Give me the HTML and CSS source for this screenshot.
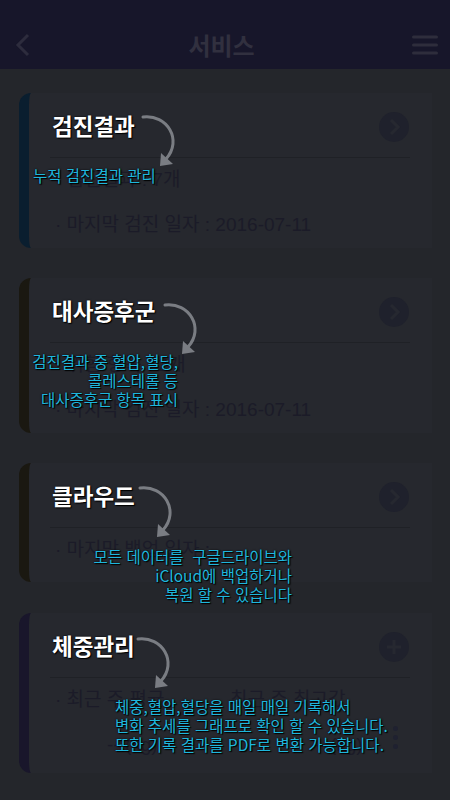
FILE: index.html
```html
<!DOCTYPE html>
<html lang="ko">
<head>
    <meta charset="UTF-8">
    <meta name="viewport" content="width=device-width, initial-scale=1.0">
    <title>서비스</title>
    <link rel="stylesheet" href="styles.css">
</head>
<body>
    <svg class="defs" width="0" height="0">
        <symbol id="hintArrow" viewBox="0 0 40 56">
            <path d="M2 3 C 26 0, 42 26, 25 45" fill="none" stroke="#7a7d83" stroke-width="3" stroke-linecap="round"/>
            <polygon points="19,52 20,39 32,50" fill="#7a7d83"/>
        </symbol>
    </svg>

    <header class="topbar">
        <button class="icon-btn">
            <svg width="16" height="24" viewBox="0 0 16 24"><polyline points="13,2 3,12 13,22" fill="none" stroke="#2d2c3d" stroke-width="3"/></svg>
        </button>
        <h1>서비스</h1>
        <button class="icon-btn">
            <svg width="26" height="20" viewBox="0 0 26 20">
                <rect x="0" y="0.5" width="26" height="3" rx="1.5" fill="#2e2d3c"/>
                <rect x="0" y="8.5" width="26" height="3" rx="1.5" fill="#2e2d3c"/>
                <rect x="0" y="16.5" width="26" height="3" rx="1.5" fill="#2e2d3c"/>
            </svg>
        </button>
    </header>

    <main class="list">
        <section class="card card-checkup">
            <div class="card-head">
                <h2 class="card-title">검진결과</h2>
                <span class="go"><svg width="32" height="32" viewBox="0 0 32 32"><circle cx="16" cy="16" r="15" fill="#1f212c"/><polyline points="13,9 20,16 13,23" fill="none" stroke="#262830" stroke-width="3"/></svg></span>
            </div>
            <div class="card-body">
                <p>· 검진결과 : 7개</p>
                <p>· 마지막 검진 일자 : 2016-07-11</p>
            </div>
            <svg class="hint-arrow arrow-checkup"><use href="#hintArrow"/></svg>
            <p class="hint hint-checkup">누적 검진결과 관리</p>
        </section>

        <section class="card card-metabolic">
            <div class="card-head">
                <h2 class="card-title">대사증후군</h2>
                <span class="go"><svg width="32" height="32" viewBox="0 0 32 32"><circle cx="16" cy="16" r="15" fill="#1f212c"/><polyline points="13,9 20,16 13,23" fill="none" stroke="#262830" stroke-width="3"/></svg></span>
            </div>
            <div class="card-body">
                <p>· 위험 항목 : 2개</p>
                <p>· 마지막 검진 일자 : 2016-07-11</p>
            </div>
            <svg class="hint-arrow arrow-metabolic"><use href="#hintArrow"/></svg>
            <p class="hint hint-metabolic">검진결과 중 혈압,혈당,<br>콜레스테롤 등<br>대사증후군 항목 표시</p>
        </section>

        <section class="card card-cloud">
            <div class="card-head">
                <h2 class="card-title">클라우드</h2>
                <span class="go"><svg width="32" height="32" viewBox="0 0 32 32"><circle cx="16" cy="16" r="15" fill="#1f212c"/><polyline points="13,9 20,16 13,23" fill="none" stroke="#262830" stroke-width="3"/></svg></span>
            </div>
            <div class="card-body">
                <p>· 마지막 백업 일자 : -</p>
            </div>
            <svg class="hint-arrow arrow-cloud"><use href="#hintArrow"/></svg>
            <p class="hint hint-cloud">모든 데이터를&nbsp; 구글드라이브와<br>iCloud에 백업하거나<br>복원 할 수 있습니다</p>
        </section>

        <section class="card card-weight">
            <div class="card-head">
                <h2 class="card-title">체중관리</h2>
                <span class="go"><svg width="32" height="32" viewBox="0 0 32 32"><circle cx="16" cy="16" r="15" fill="#1f212c"/><path d="M16 9 V23 M9 16 H23" stroke="#262830" stroke-width="3"/></svg></span>
            </div>
            <div class="card-body weight-body">
                <p>· 최근 주 평균</p>
                <p>최근 주 최고값</p>
                <span class="kebab"><i></i><i></i><i></i></span>
                <p class="value">-- (kg)</p>
                <p class="value">-- (kg)</p>
            </div>
            <svg class="hint-arrow arrow-weight"><use href="#hintArrow"/></svg>
            <p class="hint hint-weight">체중,혈압,혈당을 매일 매일 기록해서<br>변화 추세를 그래프로 확인 할 수 있습니다.<br>또한 기록 결과를 PDF로 변환 가능합니다.</p>
        </section>
    </main>
</body>
</html>
```

FILE: styles.css
```css
body {
    margin: 0;
    background-color: #24262b;
    font-family: "Noto Sans CJK KR", "Noto Sans", sans-serif;
    height: 800px;
    overflow: hidden;
}

.defs {
    position: absolute;
}

.topbar {
    height: 49px;
    padding: 20px 12px 0 15px;
    background-color: #17162a;
    display: flex;
    align-items: center;
    justify-content: space-between;
}

.topbar h1 {
    margin: 0;
    font-size: 24px;
    font-weight: bold;
    color: #31303f;
}

.icon-btn {
    background: none;
    border: none;
    padding: 0;
    display: flex;
}

.list {
    padding: 24px 18px 0 19px;
    display: flex;
    flex-direction: column;
    gap: 30px;
}

.card {
    position: relative;
    background-color: #26282e;
    border-left: 10px solid #0a1e2f;
    border-radius: 12px 0 0 12px;
}

.card-metabolic,
.card-cloud {
    border-left-color: #1a1811;
}

.card-weight {
    border-left-color: #19162b;
    margin-top: 1px;
}

.card-head {
    height: 64px;
    margin: 0 22px 0 21px;
    padding: 0 0 0 2px;
    border-bottom: 1px solid #1f2126;
    display: flex;
    align-items: center;
    justify-content: space-between;
}

.card-title {
    margin: 0;
    font-size: 22.5px;
    font-weight: bold;
    color: #ffffff;
    text-shadow: 0 0 2px #000, 1px 1px 1px #000;
}

.go {
    display: flex;
    margin-top: 3px;
}

.card-body {
    padding: 10px 0 11px 26px;
    color: #1b1b28;
    font-family: "Liberation Sans", "Noto Sans CJK KR", sans-serif;
    font-size: 19px;
}

.card-body p {
    margin: 0;
    line-height: 24px;
}

.card-body p + p {
    margin-top: 21px;
}

.card-cloud .card-body {
    padding-bottom: 20px;
}

.weight-body {
    display: grid;
    grid-template-columns: 175px 1fr 30px;
    padding-right: 22px;
    padding-bottom: 16px;
}

.weight-body p + p {
    margin-top: 0;
}

.weight-body .value {
    margin-top: 21px;
    padding-left: 52px;
}

.weight-body .value + .value {
    margin-top: 21px;
    padding-left: 82px;
}

.kebab {
    grid-row: 1 / 3;
    grid-column: 3;
    display: flex;
    flex-direction: column;
    align-items: center;
    gap: 4px;
    padding-top: 38px;
}

.kebab i {
    width: 5px;
    height: 5px;
    border-radius: 50%;
    background-color: #1f2130;
}

/* coach marks */
.hint-arrow {
    position: absolute;
    width: 40px;
    height: 56px;
}

.arrow-checkup { left: 112px; top: 21px; }
.arrow-metabolic { left: 134px; top: 24px; }
.arrow-cloud { left: 109px; top: 22px; }
.arrow-weight { left: 107px; top: 23px; }

.hint {
    position: absolute;
    margin: 0;
    font-size: 15.5px;
    line-height: 19px;
    color: #1fb6dc;
    white-space: nowrap;
    text-shadow: 0 0 2px #000, 1px 1px 1px #000;
}

.hint-checkup { left: 4px; top: 73px; }
.hint-metabolic { right: 254px; top: 74px; text-align: right; }
.hint-cloud { right: 140px; top: 84px; text-align: right; }
.hint-weight { left: 86px; top: 84px; }
```
